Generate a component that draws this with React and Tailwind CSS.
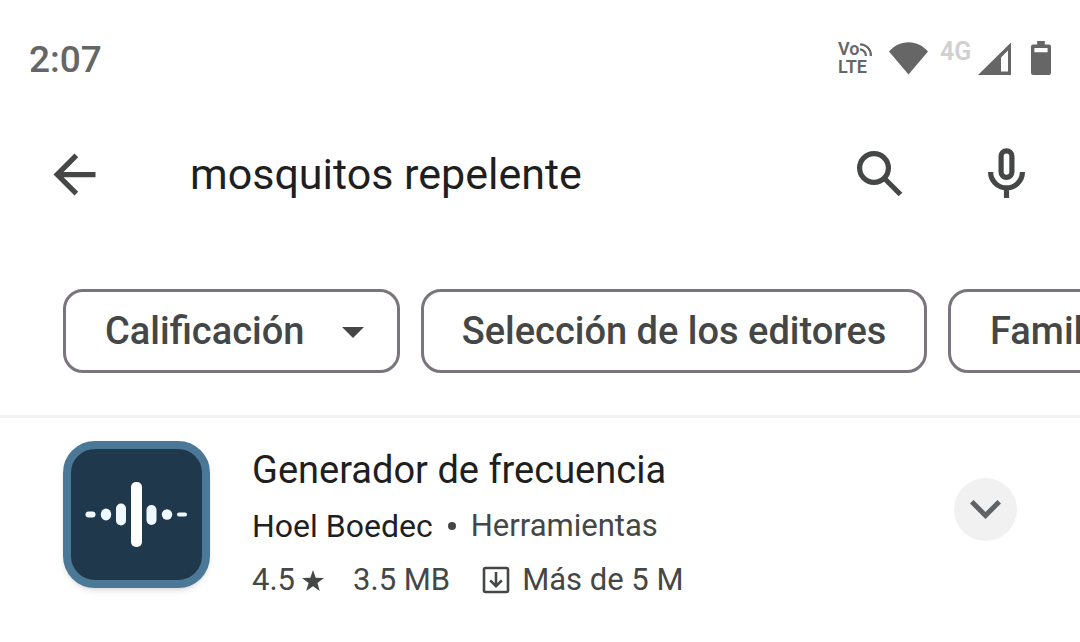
import React, { useState } from 'react';

const VoiceWaves = () => (
  <svg viewBox="0 0 13 13" className="h-[13px] w-[13px]" fill="none" stroke="currentColor" strokeWidth="2.2" aria-hidden="true">
    <path d="M1 1.4A10.8 10.8 0 0 1 11.8 13" />
    <path d="M1 6.4A6 6 0 0 1 6.8 13" />
  </svg>
);

const WifiIcon = () => (
  <svg viewBox="0 0 39 33" className="h-[33px] w-[39px]" fill="currentColor" aria-hidden="true">
    <path d="M0 9.5C5 4 11.5.3 19.5.3S34 4 39 9.5L19.5 32.6z" />
  </svg>
);

const SignalIcon = () => (
  <svg viewBox="0 0 33 33" className="h-[33px] w-[33px]" fill="currentColor" aria-hidden="true">
    <path fillRule="evenodd" d="M33 .5V33H0zM30 8.5 23 15.5V29.6h7z" />
  </svg>
);

const BatteryIcon = () => (
  <svg viewBox="0 0 20 34" className="h-[34px] w-[20px]" fill="currentColor" aria-hidden="true">
    <path fillRule="evenodd" d="M6.2 0h7.6v3.4H18a2 2 0 0 1 2 2V32a2 2 0 0 1-2 2H2a2 2 0 0 1-2-2V5.4a2 2 0 0 1 2-2h4.2zM3.4 7v4.2h13.2V7z" />
  </svg>
);

const BackIcon = () => (
  <svg viewBox="0 0 24 24" className="h-[63px] w-[63px]" fill="currentColor" aria-hidden="true">
    <path d="M20 11H7.83l5.59-5.59L12 4l-8 8 8 8 1.41-1.41L7.83 13H20z" />
  </svg>
);

const SearchIcon = () => (
  <svg viewBox="0 0 63 63" className="h-[63px] w-[63px]" fill="none" stroke="currentColor" strokeWidth="5.2" aria-hidden="true">
    <circle cx="25" cy="25" r="14.4" />
    <path d="M34.5 34.5l17 17" />
  </svg>
);

const MicIcon = () => (
  <svg viewBox="0 0 63 63" className="h-[63px] w-[63px]" fill="none" stroke="currentColor" strokeWidth="5.2" aria-hidden="true">
    <rect x="26.1" y="7.8" width="10.8" height="26.6" rx="5.4" />
    <path d="M15.6 29a15.9 15.9 0 0 0 31.8 0M31.5 45v10" />
  </svg>
);

const DownloadIcon = () => (
  <svg viewBox="0 0 28 28" className="h-7 w-7" fill="none" stroke="currentColor" strokeWidth="2.6" aria-hidden="true">
    <rect x="2" y="2" width="24" height="24" rx="1.5" />
    <path d="M14 6v14M8.2 14.4l5.8 5.8 5.8-5.8" />
  </svg>
);

const StarIcon = () => (
  <svg viewBox="0 0 22 21" className="h-[21px] w-[22px]" fill="currentColor" aria-hidden="true">
    <path d="m11 0 2.7 7.7 8.3.2-6.6 5 2.4 8.1L11 16.2 4.2 21l2.4-8.1L0 7.9l8.3-.2z" />
  </svg>
);

const WaveLogo = () => (
  <svg viewBox="0 0 131 131" className="h-full w-full" fill="#f0f9ff" aria-hidden="true">
    <rect x="14.5" y="62.5" width="10" height="6" rx="3" />
    <ellipse cx="35" cy="65.5" rx="5.2" ry="6" />
    <rect x="45" y="54.5" width="10" height="22" rx="5" />
    <rect x="60" y="33" width="11" height="65" rx="5" fill="#fff" />
    <rect x="75.5" y="56" width="10" height="20" rx="5" />
    <circle cx="96" cy="65.5" r="5.2" />
    <rect x="106" y="63.5" width="10" height="4" rx="2" />
  </svg>
);

const apps = [
  {
    id: 1,
    name: 'Generador de frecuencia',
    developer: 'Hoel Boedec',
    category: 'Herramientas',
    rating: '4.5',
    size: '3.5 MB',
    downloads: 'Más de 5 M',
  },
];

const chipClass =
  'h-[84px] shrink-0 whitespace-nowrap rounded-[20px] border-3 border-[#79747e] bg-white text-[38px] font-medium text-[#444746]';

function StatusBar() {
  return (
    <div className="flex h-[116px] items-center justify-between px-[29px] text-[#666]">
      <span className="pt-1 text-[37px] font-medium">2:07</span>
      <div className="flex items-center">
        <div className="mr-[15px] w-9 text-[18px] font-semibold leading-[18px]">
          <div className="flex items-center">
            <span>Vo</span>
            <VoiceWaves />
          </div>
          <div>LTE</div>
        </div>
        <WifiIcon />
        <span className="mb-3 ml-3 mr-[6px] w-8 text-[25px] font-semibold leading-6 text-[#d0d0d0]">4G</span>
        <SignalIcon />
        <span className="ml-5">
          <BatteryIcon />
        </span>
      </div>
    </div>
  );
}

function SearchHeader() {
  const [query, setQuery] = useState('mosquitos repelente');

  return (
    <header className="flex h-[116px] items-center pl-[43px] pr-[42px] text-[#444746]">
      <button type="button" aria-label="Atrás">
        <BackIcon />
      </button>
      <input
        type="text"
        aria-label="Buscar"
        value={query}
        onChange={(e) => setQuery(e.target.value)}
        className="ml-[84px] min-w-0 flex-1 bg-transparent text-[43px] text-[#1f1f1f] outline-none"
      />
      <div className="flex gap-[63px]">
        <button type="button" aria-label="Buscar apps">
          <SearchIcon />
        </button>
        <button type="button" aria-label="Búsqueda por voz">
          <MicIcon />
        </button>
      </div>
    </header>
  );
}

function Filters() {
  return (
    <div className="flex gap-[21px] overflow-hidden border-b-3 border-[#f2f2f2] pb-[42px] pl-[63px] pt-[57px]">
      <div className="relative shrink-0">
        <select aria-label="Calificación" className={`${chipClass} w-[337px] appearance-none pl-[39px] pr-20`}>
          <option>Calificación</option>
        </select>
        <svg viewBox="0 0 22 11" className="pointer-events-none absolute right-9 top-[38px] h-[11px] w-[22px]" fill="#444746" aria-hidden="true">
          <path d="M0 0h22L11 11z" />
        </svg>
      </div>
      <button type="button" className={`${chipClass} w-[506px]`}>
        Selección de los editores
      </button>
      <button type="button" className={`${chipClass} w-[240px] pl-[39px] text-left`}>
        Famil
      </button>
    </div>
  );
}

function AppRow({ app }) {
  return (
    <li className="flex items-start px-[63px] pt-[23px]">
      <div className="h-[147px] w-[147px] shrink-0 overflow-hidden rounded-[32px] border-8 border-[#4a7896] bg-[#20384b] shadow-md">
        <WaveLogo />
      </div>
      <div className="ml-[42px] min-w-0 flex-1 text-[31px] text-[#444746]">
        <h2 className="text-[38px] leading-[58px] text-[#1f1f1f]">{app.name}</h2>
        <p className="flex items-center leading-[54px]">
          <span className="text-[32px] text-[#1f1f1f]">{app.developer}</span>
          <span className="mx-[15px] h-2 w-2 rounded-full bg-[#444746]" />
          <span>{app.category}</span>
        </p>
        <p className="flex items-center leading-[54px]">
          <span className="mr-[7px]">{app.rating}</span>
          <StarIcon />
          <span className="ml-[29px]">{app.size}</span>
          <span className="ml-8 mr-3">
            <DownloadIcon />
          </span>
          <span>{app.downloads}</span>
        </p>
      </div>
      <button
        type="button"
        aria-label="Mostrar detalles"
        className="mt-[37px] flex h-[63px] w-[63px] shrink-0 items-center justify-center rounded-full bg-[#f1f1f1]"
      >
        <svg viewBox="0 0 31 19" className="h-[19px] w-[31px]" fill="none" stroke="#5f6368" strokeWidth="5" aria-hidden="true">
          <path d="m1.8 1.8 13.7 13.7L29.2 1.8" />
        </svg>
      </button>
    </li>
  );
}

export default function App() {
  return (
    <main className="min-h-screen overflow-hidden bg-white font-[Roboto,sans-serif]">
      <StatusBar />
      <SearchHeader />
      <Filters />
      <ul>
        {apps.map((app) => (
          <AppRow key={app.id} app={app} />
        ))}
      </ul>
    </main>
  );
}
